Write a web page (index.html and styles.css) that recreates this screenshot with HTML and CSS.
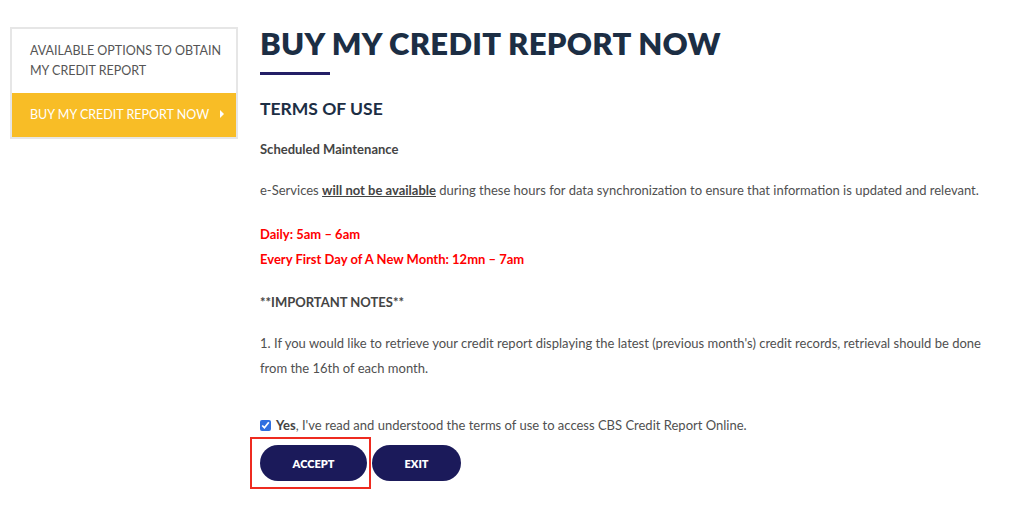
FILE: index.html
```html
<!DOCTYPE html>
<html lang="en">
<head>
    <meta charset="UTF-8">
    <meta name="viewport" content="width=device-width, initial-scale=1.0">
    <title>Buy My Credit Report Now</title>
    <link rel="stylesheet" href="styles.css">
</head>
<body>
    <div class="page">
        <!-- Side navigation -->
        <aside class="sidebar">
            <a class="side-link" href="#">Available options to obtain my credit report</a>
            <a class="side-link active" href="#">Buy my credit report now <span class="caret"></span></a>
        </aside>

        <main class="content">
            <h1>Buy My Credit Report Now</h1>
            <div class="title-bar"></div>

            <h2>Terms of Use</h2>

            <p class="label first">Scheduled Maintenance</p>
            <p>e-Services <strong class="underline">will not be available</strong> during these hours for data synchronization to ensure that information is updated and relevant.</p>

            <div class="schedule">
                <p>Daily: 5am &ndash; 6am</p>
                <p>Every First Day of A New Month: 12mn &ndash; 7am</p>
            </div>

            <p class="label">**IMPORTANT NOTES**</p>
            <p class="note">1. If you would like to retrieve your credit report displaying the latest (previous month's) credit records, retrieval should be done from the 16th of each month.</p>

            <form class="agree-form">
                <label class="agree">
                    <input type="checkbox" checked>
                    <span><strong>Yes</strong>, I've read and understood the terms of use to access CBS Credit Report Online.</span>
                </label>
                <div class="actions">
                    <span class="highlight"><button type="submit" class="btn accept">Accept</button></span>
                    <button type="button" class="btn exit">Exit</button>
                </div>
            </form>
        </main>
    </div>
</body>
</html>
```

FILE: styles.css
```css
/* General page */
body {
    margin: 0;
    font-family: "Lato", "Open Sans", sans-serif;
    color: #505050;
    background: #fff;
}

.page {
    display: flex;
    align-items: flex-start;
    padding: 27px 0 0 10px;
}

/* Sidebar */
.sidebar {
    width: 224px;
    border: 2px solid #e6e6e6;
    display: flex;
    flex-direction: column;
    margin-right: 22px;
}

.side-link {
    display: block;
    position: relative;
    padding: 12px 6px 12px 18px;
    font-size: 12.5px;
    line-height: 20px;
    text-transform: uppercase;
    text-decoration: none;
    color: #555;
}

.side-link.active {
    background-color: #f8bd26;
    color: #fff;
}

.caret {
    position: absolute;
    right: 12px;
    top: 17px;
    width: 0;
    height: 0;
    border-top: 4px solid transparent;
    border-bottom: 4px solid transparent;
    border-left: 4px solid #fff;
}

/* Main content */
.content {
    flex: 1;
    padding-right: 30px;
}

h1 {
    margin: 0;
    font-size: 31px;
    line-height: 32px;
    font-weight: 800;
    text-transform: uppercase;
    color: #1c2e44;
    letter-spacing: 0.3px;
}

.title-bar {
    width: 70px;
    height: 3px;
    background-color: #231f66;
    margin: 13px 0 0;
}

h2 {
    margin: 24px 0 0;
    font-size: 17.5px;
    line-height: 20px;
    font-weight: 700;
    text-transform: uppercase;
    color: #1c2e44;
}

p {
    margin: 0;
    font-size: 13px;
    line-height: 25px;
}

.label {
    font-weight: 700;
    color: #444;
    margin-top: 18px;
}

.label.first {
    margin-top: 18px;
}

.content > p:not(.label) {
    margin-top: 16px;
}

.underline {
    text-decoration: underline;
    color: #444;
}

.schedule {
    margin-top: 19px;
}

.schedule p {
    color: #ff0000;
    font-weight: 700;
}

/* Agreement form */
.agree-form {
    margin-top: 34px;
}

.agree {
    display: flex;
    align-items: center;
    font-size: 13px;
    line-height: 20px;
    color: #505050;
}

.agree input {
    margin: 0 5px 0 0;
    width: 11px;
    height: 11px;
    accent-color: #2f6fe0;
}

.agree strong {
    color: #444;
}

.actions {
    display: flex;
    align-items: center;
    gap: 1px;
    margin-top: 2px;
}

.highlight {
    display: inline-block;
    border: 2px solid #ee2b20;
    padding: 6px 2px 6px 8px;
    margin-left: -10px;
}

.btn {
    background-color: #1b1a5a;
    color: #fff;
    border: none;
    border-radius: 18px;
    height: 36px;
    font-family: inherit;
    font-size: 11px;
    font-weight: 800;
    text-transform: uppercase;
    cursor: pointer;
    display: block;
}

.accept {
    width: 107px;
}

.exit {
    width: 89px;
}
```
